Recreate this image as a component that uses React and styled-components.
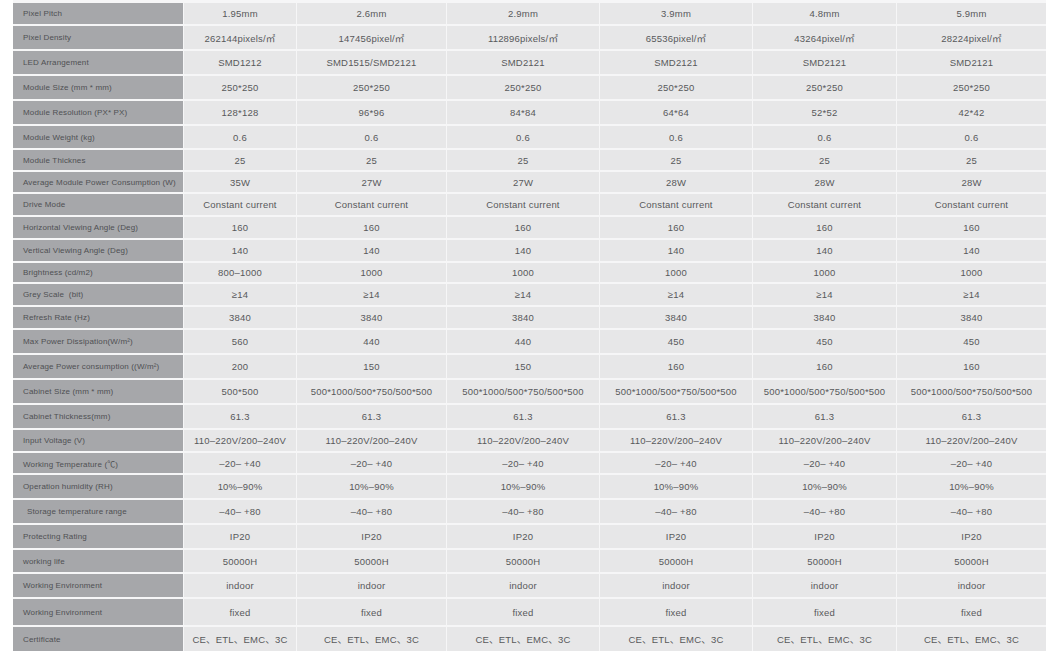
import React from "react";
import styled, { createGlobalStyle } from "styled-components";

const GlobalStyle = createGlobalStyle`
  html, body {
    margin: 0;
    padding: 0;
    background: #ffffff;
  }
  body {
    font-family: "Liberation Sans", "Noto Sans CJK SC", Arial, sans-serif;
  }
`;

const ROW_HEIGHTS = [
  21, 23, 23, 23, 23, 22, 20, 20, 21, 21, 21, 19, 21, 21, 23, 23, 23, 23, 21,
  20, 23, 23, 23, 22, 23, 26, 24,
];

const same = (v) => [v, v, v, v, v, v];

const specs = [
  { label: "Pixel Pitch", values: ["1.95mm", "2.6mm", "2.9mm", "3.9mm", "4.8mm", "5.9mm"] },
  {
    label: "Pixel Density",
    values: [
      "262144pixels/㎡",
      "147456pixel/㎡",
      "112896pixels/㎡",
      "65536pixel/㎡",
      "43264pixel/㎡",
      "28224pixel/㎡",
    ],
  },
  {
    label: "LED Arrangement",
    values: ["SMD1212", "SMD1515/SMD2121", "SMD2121", "SMD2121", "SMD2121", "SMD2121"],
  },
  { label: "Module Size (mm * mm)", values: same("250*250") },
  {
    label: "Module Resolution (PX* PX)",
    values: ["128*128", "96*96", "84*84", "64*64", "52*52", "42*42"],
  },
  { label: "Module Weight (kg)", values: same("0.6") },
  { label: "Module Thicknes", values: same("25") },
  {
    label: "Average Module Power Consumption (W)",
    values: ["35W", "27W", "27W", "28W", "28W", "28W"],
  },
  { label: "Drive Mode", values: same("Constant current") },
  { label: "Horizontal Viewing Angle (Deg)", values: same("160") },
  { label: "Vertical Viewing Angle (Deg)", values: same("140") },
  {
    label: "Brightness (cd/m2)",
    values: ["800–1000", "1000", "1000", "1000", "1000", "1000"],
  },
  { label: "Grey Scale  (bit)", values: same("≥14") },
  { label: "Refresh Rate (Hz)", values: same("3840") },
  {
    label: "Max Power Dissipation(W/m²)",
    values: ["560", "440", "440", "450", "450", "450"],
  },
  {
    label: "Average Power consumption ((W/m²)",
    values: ["200", "150", "150", "160", "160", "160"],
  },
  {
    label: "Cabinet Size (mm * mm)",
    values: [
      "500*500",
      "500*1000/500*750/500*500",
      "500*1000/500*750/500*500",
      "500*1000/500*750/500*500",
      "500*1000/500*750/500*500",
      "500*1000/500*750/500*500",
    ],
  },
  { label: "Cabinet Thickness(mm)", values: same("61.3") },
  { label: "Input Voltage (V)", values: same("110–220V/200–240V") },
  { label: "Working Temperature (℃)", values: same("–20– +40") },
  { label: "Operation humidity (RH)", values: same("10%–90%") },
  { label: "Storage temperature range", values: same("–40– +80"), indent: true },
  { label: "Protecting Rating", values: same("IP20") },
  { label: "working life", values: same("50000H") },
  { label: "Working Environment", values: same("indoor") },
  { label: "Working Environment", values: same("fixed") },
  { label: "Certificate", values: same("CE、ETL、EMC、3C") },
];

export default function App() {
  return (
    <>
      <GlobalStyle />
      <Page>
        <SpecTable $rows={ROW_HEIGHTS}>
          {specs.map((row, i) => (
            <React.Fragment key={i}>
              <LabelCell $indent={row.indent}>{row.label}</LabelCell>
              {row.values.map((v, j) => (
                <ValueCell key={j}>{v}</ValueCell>
              ))}
            </React.Fragment>
          ))}
        </SpecTable>
      </Page>
    </>
  );
}

const Page = styled.div`
  width: 1059px;
  height: 657px;
  overflow: hidden;
  background: #ffffff;
  padding-left: 13px;
  box-sizing: border-box;
`;

const SpecTable = styled.div`
  display: grid;
  width: 1033px;
  grid-template-columns: 170px 112px 149px 152px 152px 143px 149px;
  grid-template-rows: ${(p) => p.$rows.map((h) => `${h}px`).join(" ")};
  column-gap: 1px;
  row-gap: 2px;
  padding-top: 3px;
  background: #f6f6f7;
`;

const LabelCell = styled.div`
  display: flex;
  align-items: center;
  padding-left: ${(p) => (p.$indent ? "14px" : "10px")};
  background: #a6a7aa;
  color: #4f5053;
  font-size: 8px;
  letter-spacing: 0.15px;
  white-space: pre;
  overflow: hidden;
`;

const ValueCell = styled.div`
  display: flex;
  align-items: center;
  justify-content: center;
  background: #e7e7e8;
  color: #58595b;
  font-size: 9.5px;
  letter-spacing: 0.2px;
  white-space: nowrap;
  overflow: hidden;
`;
